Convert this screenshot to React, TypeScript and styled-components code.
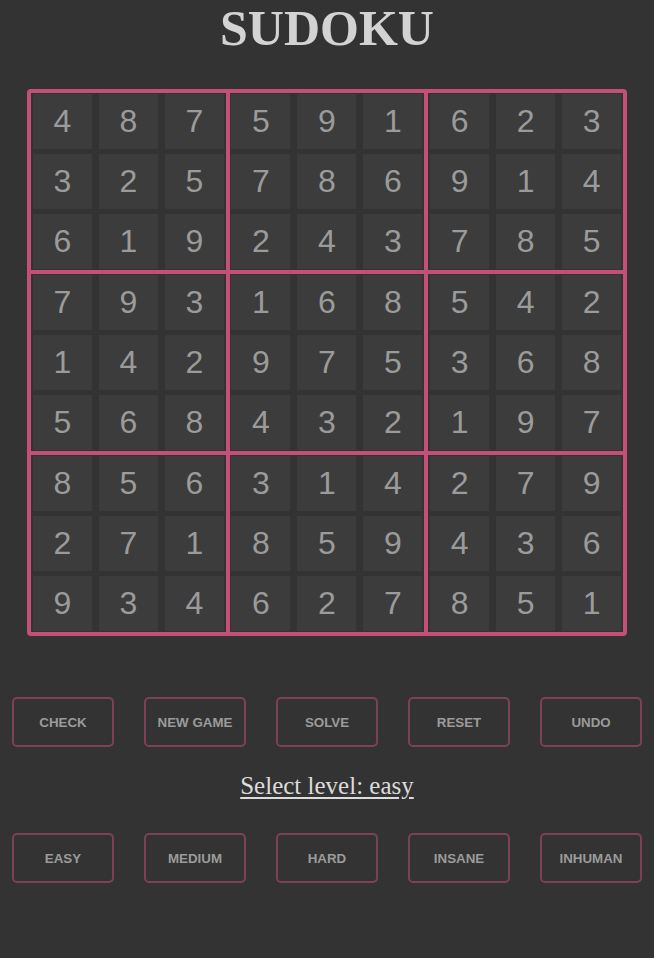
import React from 'react';
import styled, { createGlobalStyle } from 'styled-components';

const GlobalStyle = createGlobalStyle`
  html, body {
    margin: 0;
    padding: 0;
    background: #333333;
  }
`;

const StyledPage = styled.div`
  width: 654px;
  min-height: 958px;
  background: #333333;
  display: flex;
  flex-direction: column;
  align-items: center;
`;

const StyledTitle = styled.h1`
  margin: 0;
  font-family: 'Liberation Serif', 'Times New Roman', serif;
  font-size: 50px;
  font-weight: bold;
  line-height: 56px;
  color: #d3d3d3;
  text-align: center;
`;

const StyledBoard = styled.div`
  margin-top: 33px;
  width: 600px;
  height: 547px;
  box-sizing: border-box;
  padding: 4px;
  border-radius: 4px;
  background: #c4507a;
  display: grid;
  grid-template-columns: repeat(3, 1fr);
  grid-template-rows: repeat(3, 1fr);
  gap: 4px;
`;

const StyledBox = styled.div`
  background: #333333;
  display: grid;
  grid-template-columns: repeat(3, 59px);
  grid-template-rows: repeat(3, 55px);
  column-gap: 7px;
  row-gap: 5px;
  justify-content: center;
  align-content: center;
`;

const StyledCell = styled.div`
  background: #3c3c3c;
  display: flex;
  align-items: center;
  justify-content: center;
  font-family: 'Liberation Sans', Arial, sans-serif;
  font-size: 32px;
  color: #9b9b9b;
`;

const StyledButtonRow = styled.div<{ top: number }>`
  margin-top: ${({ top }) => top}px;
  width: 100%;
  box-sizing: border-box;
  padding: 0 12px;
  display: flex;
  justify-content: space-between;
`;

const StyledButton = styled.button`
  width: 102px;
  height: 50px;
  box-sizing: border-box;
  border: 2px solid #7c4156;
  border-radius: 5px;
  background: transparent;
  color: #9b9b9b;
  font-family: 'Liberation Sans', Arial, sans-serif;
  font-size: 13.33px;
  font-weight: bold;
  text-transform: uppercase;
  padding: 0;
  cursor: pointer;
`;

const StyledLevel = styled.div`
  margin-top: 25px;
  font-family: 'Liberation Serif', 'Times New Roman', serif;
  font-size: 25px;
  color: #dcdcdc;
  text-decoration: underline;
  text-underline-offset: 3px;
`;

const grid = [
  [4, 8, 7, 5, 9, 1, 6, 2, 3],
  [3, 2, 5, 7, 8, 6, 9, 1, 4],
  [6, 1, 9, 2, 4, 3, 7, 8, 5],
  [7, 9, 3, 1, 6, 8, 5, 4, 2],
  [1, 4, 2, 9, 7, 5, 3, 6, 8],
  [5, 6, 8, 4, 3, 2, 1, 9, 7],
  [8, 5, 6, 3, 1, 4, 2, 7, 9],
  [2, 7, 1, 8, 5, 9, 4, 3, 6],
  [9, 3, 4, 6, 2, 7, 8, 5, 1],
];

const actions = ['Check', 'New game', 'Solve', 'Reset', 'Undo'];
const levels = ['Easy', 'Medium', 'Hard', 'Insane', 'Inhuman'];

const boxCells = (box: number) => {
  const br = Math.floor(box / 3) * 3;
  const bc = (box % 3) * 3;
  const cells: number[] = [];
  for (let r = br; r < br + 3; r++) {
    for (let c = bc; c < bc + 3; c++) cells.push(grid[r][c]);
  }
  return cells;
};

const App = () => {
  return (
    <>
      <GlobalStyle />
      <StyledPage>
        <StyledTitle>SUDOKU</StyledTitle>
        <StyledBoard>
          {[0, 1, 2, 3, 4, 5, 6, 7, 8].map((box) => (
            <StyledBox key={box}>
              {boxCells(box).map((n, i) => (
                <StyledCell key={i}>{n}</StyledCell>
              ))}
            </StyledBox>
          ))}
        </StyledBoard>
        <StyledButtonRow top={61}>
          {actions.map((a) => (
            <StyledButton key={a}>{a}</StyledButton>
          ))}
        </StyledButtonRow>
        <StyledLevel>Select level: easy</StyledLevel>
        <StyledButtonRow top={33}>
          {levels.map((l) => (
            <StyledButton key={l}>{l}</StyledButton>
          ))}
        </StyledButtonRow>
      </StyledPage>
    </>
  );
};

export default App;
